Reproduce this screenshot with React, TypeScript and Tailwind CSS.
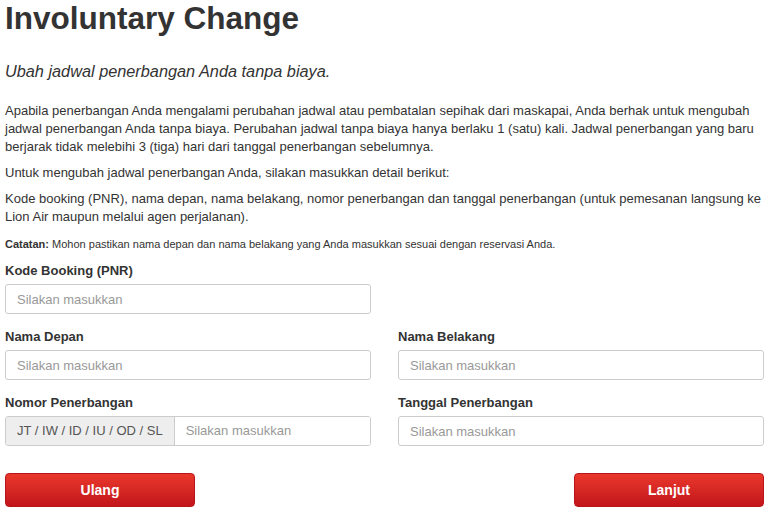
import React from 'react';

const font = { fontFamily: '"Liberation Sans", Arial, sans-serif' };

const Field: React.FC<{ label: string; children?: React.ReactNode }> = ({ label, children }) => (
  <div className="flex flex-col">
    <label className="text-[13px] leading-[18px] font-bold text-[#333] mb-[4px]">{label}</label>
    {children ?? (
      <input
        className="h-[30px] w-full rounded-[3px] border border-[#ccc] bg-white px-[11px] text-[13px] text-[#555] placeholder:text-[#999] outline-none"
        placeholder="Silakan masukkan"
      />
    )}
  </div>
);

export default function App() {
  return (
    <div className="bg-white pl-[5px] pr-[12px] text-[#333]" style={font}>
      <h1 className="text-[31.5px] leading-[36px] font-bold text-[#333]">Involuntary Change</h1>
      <p className="mt-[25px] text-[16.3px] leading-[20px] italic">Ubah jadwal penerbangan Anda tanpa biaya.</p>

      <p className="mt-[21px] text-[13px] leading-[18px]">
        Apabila penerbangan Anda mengalami perubahan jadwal atau pembatalan sepihak dari maskapai, Anda berhak untuk mengubah
        jadwal penerbangan Anda tanpa biaya. Perubahan jadwal tanpa biaya hanya berlaku 1 (satu) kali. Jadwal penerbangan yang baru
        berjarak tidak melebihi 3 (tiga) hari dari tanggal penerbangan sebelumnya.
      </p>
      <p className="mt-[8px] text-[13px] leading-[18px]">
        Untuk mengubah jadwal penerbangan Anda, silakan masukkan detail berikut:
      </p>
      <p className="mt-[8px] text-[13px] leading-[18px]">
        Kode booking (PNR), nama depan, nama belakang, nomor penerbangan dan tanggal penerbangan (untuk pemesanan langsung ke
        Lion Air maupun melalui agen perjalanan).
      </p>
      <p className="mt-[11px] text-[11px] leading-[14px]">
        <b>Catatan:</b> Mohon pastikan nama depan dan nama belakang yang Anda masukkan sesuai dengan reservasi Anda.
      </p>

      <div className="mt-[11px] grid grid-cols-2 gap-x-[27px] gap-y-[14px]">
        <Field label="Kode Booking (PNR)" />
        <div />
        <Field label="Nama Depan" />
        <Field label="Nama Belakang" />
        <Field label="Nomor Penerbangan">
          <div className="flex h-[30px] w-full rounded-[3px] border border-[#ccc] overflow-hidden">
            <span className="flex items-center bg-[#eee] border-r border-[#ccc] px-[11px] text-[13px] text-[#555] whitespace-nowrap">
              JT / IW / ID / IU / OD / SL
            </span>
            <input
              className="flex-1 min-w-0 bg-white px-[11px] text-[13px] text-[#555] placeholder:text-[#999] outline-none"
              placeholder="Silakan masukkan"
            />
          </div>
        </Field>
        <Field label="Tanggal Penerbangan" />
      </div>

      <div className="mt-[27px] flex justify-between">
        <button className="h-[34px] w-[190px] rounded-[4px] border border-[#b8141a] bg-gradient-to-b from-[#ea372c] to-[#c2141b] text-[14px] font-bold text-white">
          Ulang
        </button>
        <button className="h-[34px] w-[190px] rounded-[4px] border border-[#b8141a] bg-gradient-to-b from-[#ea372c] to-[#c2141b] text-[14px] font-bold text-white">
          Lanjut
        </button>
      </div>
    </div>
  );
}
